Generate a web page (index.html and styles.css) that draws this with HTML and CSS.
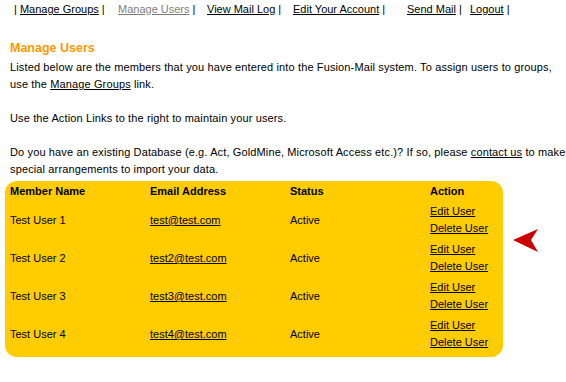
FILE: index.html
```html
<!DOCTYPE html>
<html lang="en">
<head>
  <meta charset="UTF-8">
  <title>Manage Users</title>
  <link rel="stylesheet" href="styles.css">
</head>
<body>

  <div class="nav">
    <span>| <a href="#">Manage Groups</a> |</span>
    <span><a href="#" class="current">Manage Users</a> |</span>
    <span><a href="#">View Mail Log</a> |</span>
    <span><a href="#">Edit Your Account</a> |</span>
    <span><a href="#">Send Mail</a> |</span>
    <span><a href="#">Logout</a> |</span>
  </div>

  <div class="content">
    <div class="intro">
      <h2>Manage Users</h2>
      <p>Listed below are the members that you have entered into the Fusion-Mail system. To assign users to groups,<br>use the <a href="#">Manage Groups</a> link.</p>
      <p>Use the Action Links to the right to maintain your users.</p>
      <p>Do you have an existing Database (e.g. Act, GoldMine, Microsoft Access etc.)? If so, please <a href="#">contact us</a> to make<br>special arrangements to import your data.</p>
    </div>

    <div class="users-wrap">
      <div class="users">
        <div class="row head">
          <div>Member Name</div>
          <div>Email Address</div>
          <div>Status</div>
          <div>Action</div>
        </div>
        <div class="row">
          <div>Test User 1</div>
          <div><a href="#">test@test.com</a></div>
          <div>Active</div>
          <div class="actions"><a href="#">Edit User</a><a href="#">Delete User</a></div>
        </div>
        <div class="row">
          <div>Test User 2</div>
          <div><a href="#">test2@test.com</a></div>
          <div>Active</div>
          <div class="actions"><a href="#">Edit User</a><a href="#">Delete User</a></div>
        </div>
        <div class="row">
          <div>Test User 3</div>
          <div><a href="#">test3@test.com</a></div>
          <div>Active</div>
          <div class="actions"><a href="#">Edit User</a><a href="#">Delete User</a></div>
        </div>
        <div class="row">
          <div>Test User 4</div>
          <div><a href="#">test4@test.com</a></div>
          <div>Active</div>
          <div class="actions"><a href="#">Edit User</a><a href="#">Delete User</a></div>
        </div>
      </div>

      <svg class="arrow" width="26" height="24" viewBox="0 0 26 24">
        <polygon points="0,11 25,0 18,11 25,23" fill="#cc0000" />
      </svg>
    </div>
  </div>

</body>
</html>
```

FILE: styles.css
```css
body {
  font-family: "Liberation Sans", Arial, sans-serif;
  font-size: 11px;
  color: #000;
  background: #fff;
  margin: 0;
  overflow: hidden;
}

a {
  color: #000;
  text-decoration: underline;
}

.nav {
  display: grid;
  grid-template-columns: 104px 89px 86px 114px 63px auto;
  padding: 3px 0 0 14px;
  line-height: 13px;
  height: 35px;
  white-space: nowrap;
}

.nav a.current {
  color: #808080;
}

.content {
  padding: 0 0 0 5px;
}

.intro {
  padding: 0 0 0 5px;
}

.intro p {
  letter-spacing: 0.13px;
  white-space: nowrap;
}

h2 {
  color: #ff9900;
  font-size: 12.5px;
  margin: 0;
  padding-top: 3px;
  line-height: 14px;
  height: 18px;
}

p {
  margin: 0 0 17px;
  line-height: 17px;
}

p:last-child {
  margin-bottom: 3px;
}

.users-wrap {
  display: flex;
  align-items: flex-start;
}

.users {
  width: 498px;
  background: #ffcc00;
  border-radius: 12px;
  padding-bottom: 4px;
}

.row {
  display: grid;
  grid-template-columns: 140px 140px 140px auto;
  align-items: center;
  height: 38px;
  padding-left: 5px;
}

.row.head {
  height: 20px;
  font-weight: bold;
}

.actions {
  display: flex;
  flex-direction: column;
  line-height: 17px;
}

.actions a {
  align-self: flex-start;
}

.arrow {
  margin: 48px 0 0 10px;
}
```
